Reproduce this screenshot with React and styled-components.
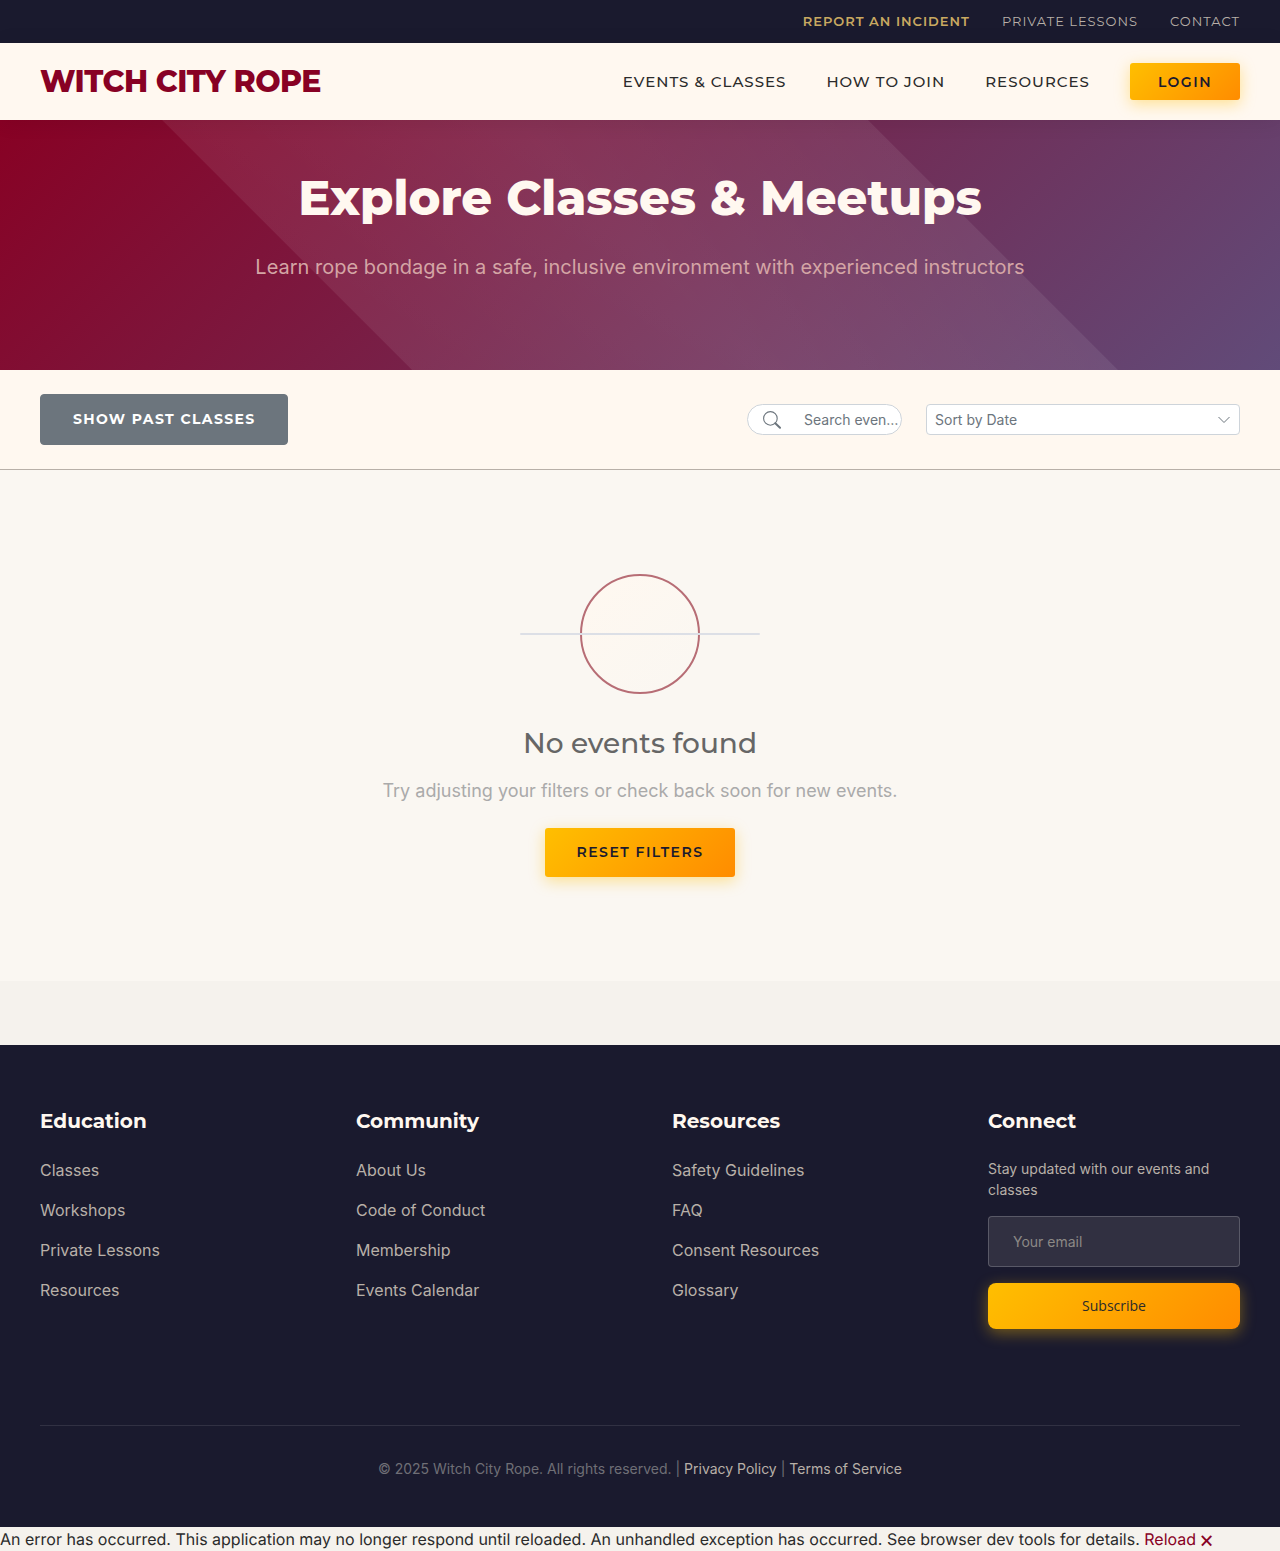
import React from "react";
import styled, { createGlobalStyle, css } from "styled-components";

const color = {
  midnight: "#1a1a2e",
  ivory: "#fff8f0",
  cream: "#faf7f2",
  page: "#f5f2ed",
  burgundy: "#880124",
  plum: "#614b79",
  stone: "#b8b0a8",
  brass: "#c9a961",
  charcoal: "#2b2b2b",
};
const heading = '"Montserrat", "Inter", sans-serif';
const body = '"Inter", sans-serif';

const GlobalStyle = createGlobalStyle`
  *, *::before, *::after { box-sizing: border-box; }
  body { margin: 0; background: ${color.page}; color: ${color.charcoal}; font: 400 16px/24px ${body}; }
  a { color: inherit; text-decoration: none; }
  h1, h2, h3, p, ul { margin: 0; padding: 0; }
  ul { list-style: none; }
`;

const UtilityBar = styled.nav`
  display: flex;
  justify-content: flex-end;
  align-items: center;
  gap: 32px;
  height: 43px;
  padding: 0 40px;
  background: ${color.midnight};
`;
const UtilityLink = styled.a`
  font: ${p => (p.$strong ? 600 : 400)} 13px/21px ${heading};
  letter-spacing: 1px;
  text-transform: uppercase;
  color: ${p => (p.$strong ? color.brass : color.stone)};
`;

const Header = styled.header`
  position: relative;
  z-index: 1;
  display: flex;
  justify-content: space-between;
  align-items: center;
  height: 77px;
  padding: 0 40px;
  background: ${color.ivory};
  box-shadow: 0 2px 20px rgba(0, 0, 0, 0.08);
`;
const Logo = styled.a`
  font: 800 30px/45px ${heading};
  letter-spacing: -0.5px;
  color: ${color.burgundy};
`;
const Nav = styled.nav`
  display: flex;
  align-items: center;
  gap: 40px;
`;
const NavLink = styled.a`
  font: 500 15px/24px ${heading};
  letter-spacing: 1px;
  text-transform: uppercase;
`;

const amber = css`
  border: 0;
  background: linear-gradient(135deg, #ffbf00 0%, #ff8c00 100%);
  box-shadow: 0 4px 15px rgba(255, 191, 0, 0.4);
  color: ${color.midnight};
`;
const AmberButton = styled.button`
  ${amber}
  padding: ${p => (p.$compact ? "11px 28px 9px" : "16px 31.5px")};
  border-radius: 3px;
  font: 600 14px/17px ${heading};
  letter-spacing: ${p => (p.$compact ? "1.5px" : "1.48px")};
  text-transform: uppercase;
`;

const Hero = styled.section`
  height: 250px;
  padding-top: 42px;
  text-align: center;
  background:
    linear-gradient(45deg, transparent 26.9%, rgba(255, 255, 255, 0.075) 26.97%, rgba(255, 255, 255, 0.1) 50%, rgba(255, 255, 255, 0.075) 73.03%, transparent 73.1%),
    linear-gradient(135deg, ${color.burgundy} 0%, ${color.plum} 100%);
`;
const HeroTitle = styled.h1`
  font: 800 48px/72px ${heading};
  color: ${color.ivory};
`;
const HeroText = styled.p`
  margin-top: 16px;
  font-size: 20px;
  line-height: 34px;
  color: #d4a5a5;
`;

const Toolbar = styled.section`
  display: flex;
  justify-content: space-between;
  align-items: center;
  height: 100px;
  padding: 0 40px;
  background: ${color.ivory};
  border-bottom: 1px solid ${color.stone};
`;
const PastButton = styled.button`
  padding: 16px 31.8px 16px 32px;
  border: 1px solid #6c757d;
  border-radius: 4px;
  background: #6c757d;
  color: #fff;
  font: 700 14px/17px ${heading};
  letter-spacing: 1.37px;
  text-transform: uppercase;
`;
const Filters = styled.div`
  display: flex;
  gap: 24px;
`;
const field = css`
  display: flex;
  align-items: center;
  height: 31.6px;
  border: 1px solid #ced4da;
  background: #fff;
  color: #6c757d;
  font-size: 14px;
  line-height: 22px;
`;
const SearchField = styled.div`
  ${field}
  width: 155px;
  padding: 0 2px 0 15px;
  border-radius: 16px;
  white-space: nowrap;
  svg { flex: none; margin-right: 23px; }
`;
const SortField = styled.div`
  ${field}
  justify-content: space-between;
  width: 314px;
  padding: 0 8px;
  border-radius: 4px;
`;

const Main = styled.main`
  display: flex;
  flex-direction: column;
  align-items: center;
  height: 511px;
  padding-top: 104px;
  background: ${color.cream};
`;
const Ring = styled.div`
  position: relative;
  width: 120px;
  height: 120px;
  border: 2px solid #b76d75;
  border-radius: 50%;
  background: linear-gradient(135deg, ${color.ivory} 0%, ${color.cream} 100%);
  &::after {
    content: "";
    position: absolute;
    top: 57px;
    left: -62px;
    width: 240px;
    height: 2px;
    border-radius: 1px;
    background: #dcdfe6;
  }
`;
const EmptyTitle = styled.h2`
  margin-top: 28px;
  font: 500 28px/42px ${heading};
  color: #666;
`;
const EmptyText = styled.p`
  margin: 13px 0 23px;
  font-size: 18px;
  line-height: 28px;
  color: #aaa;
`;

const Footer = styled.footer`
  height: 482px;
  margin-top: 64px;
  padding: 64px 40px 0;
  background: ${color.midnight};
`;
const Columns = styled.div`
  display: grid;
  grid-template-columns: repeat(4, 1fr);
  gap: 64px;
  height: 316px;
`;
const ColumnTitle = styled.h3`
  margin-bottom: 25px;
  font: 700 20px/24px ${heading};
  color: ${color.ivory};
`;
const LinkList = styled.ul`
  display: grid;
  gap: 16px;
  color: ${color.stone};
`;
const Newsletter = styled.form`
  display: grid;
  align-content: start;
`;
const Blurb = styled.p`
  font-size: 14px;
  line-height: 21px;
  color: ${color.stone};
`;
const Email = styled.input`
  width: 100%;
  height: 51px;
  margin: 16px 0;
  padding: 0 24px;
  border: 1px solid rgba(255, 255, 255, 0.2);
  border-radius: 4px;
  background: rgba(255, 248, 240, 0.1);
  font: 400 14px/17px ${body};
  &::placeholder { color: #8c8986; opacity: 1; }
`;
const Subscribe = styled.button`
  ${amber}
  height: 46px;
  border-radius: 8px;
  color: ${color.charcoal};
  font: 400 14px/20px "Open Sans", sans-serif;
`;
const Legal = styled.div`
  padding-top: 32px;
  border-top: 1px solid rgba(255, 255, 255, 0.1);
  text-align: center;
  font-size: 14px;
  line-height: 21px;
  color: #6f6f76;
  a { color: ${color.stone}; }
`;

const ErrorBar = styled.div`
  height: 24px;
  white-space: nowrap;
  text-rendering: geometricPrecision;
  a { color: ${color.burgundy}; }
`;

const columns = [
  ["Education", ["Classes", "Workshops", "Private Lessons", "Resources"]],
  ["Community", ["About Us", "Code of Conduct", "Membership", "Events Calendar"]],
  ["Resources", ["Safety Guidelines", "FAQ", "Consent Resources", "Glossary"]],
];

const SearchIcon = () => (
  <svg width="18" height="18" viewBox="0 0 18 18" fill="none" stroke="#6c757d">
    <circle cx="7.4" cy="7.4" r="6.8" strokeWidth="1.1" />
    <path d="M12.3 12.3 17 16.8" strokeWidth="2" strokeLinecap="round" />
  </svg>
);
const Chevron = () => (
  <svg width="14" height="10" viewBox="0 0 14 10" fill="none" stroke="#6c757d">
    <path d="M1.5 2 7 7.5 12.5 2" />
  </svg>
);

export default function App() {
  return (
    <>
      <GlobalStyle />
      <UtilityBar>
        <UtilityLink $strong href="#">Report an Incident</UtilityLink>
        <UtilityLink href="#">Private Lessons</UtilityLink>
        <UtilityLink href="#">Contact</UtilityLink>
      </UtilityBar>
      <Header>
        <Logo href="#">WITCH CITY ROPE</Logo>
        <Nav>
          <NavLink href="#">Events &amp; Classes</NavLink>
          <NavLink href="#">How to Join</NavLink>
          <NavLink href="#">Resources</NavLink>
          <AmberButton $compact>Login</AmberButton>
        </Nav>
      </Header>
      <Hero>
        <HeroTitle>Explore Classes &amp; Meetups</HeroTitle>
        <HeroText>Learn rope bondage in a safe, inclusive environment with experienced instructors</HeroText>
      </Hero>
      <Toolbar>
        <PastButton>Show Past Classes</PastButton>
        <Filters>
          <SearchField><SearchIcon />Search even…</SearchField>
          <SortField>Sort by Date<Chevron /></SortField>
        </Filters>
      </Toolbar>
      <Main>
        <Ring />
        <EmptyTitle>No events found</EmptyTitle>
        <EmptyText>Try adjusting your filters or check back soon for new events.</EmptyText>
        <AmberButton>Reset Filters</AmberButton>
      </Main>
      <Footer>
        <Columns>
          {columns.map(([title, links]) => (
            <section key={title}>
              <ColumnTitle>{title}</ColumnTitle>
              <LinkList>{links.map(l => <li key={l}><a href="#">{l}</a></li>)}</LinkList>
            </section>
          ))}
          <section>
            <ColumnTitle>Connect</ColumnTitle>
            <Newsletter>
              <Blurb>Stay updated with our events and classes</Blurb>
              <Email placeholder="Your email" />
              <Subscribe type="button">Subscribe</Subscribe>
            </Newsletter>
          </section>
        </Columns>
        <Legal>
          © 2025 Witch City Rope. All rights reserved. | <a href="#">Privacy Policy</a> | <a href="#">Terms of Service</a>
        </Legal>
      </Footer>
      <ErrorBar>
        An error has occurred. This application may no longer respond until reloaded. An unhandled exception has occurred. See browser dev tools for details. <a href="#">Reload</a> <a href="#">🗙</a>
      </ErrorBar>
    </>
  );
}
